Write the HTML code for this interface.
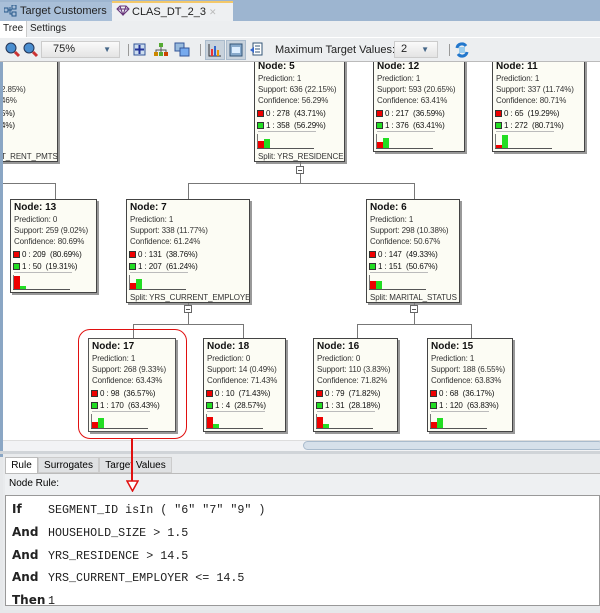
<!DOCTYPE html>
<html><head><meta charset="utf-8"><style>
*{margin:0;padding:0;box-sizing:border-box}
body{width:600px;height:610px;overflow:hidden;background:#e6e8ea;font-family:"Liberation Sans","DejaVu Sans",sans-serif;position:relative}
.a{position:absolute}
.tabbar{left:0;top:0;width:600px;height:21px;background:#9db5d0}
.tab{top:2px;height:19px;font-size:11px;line-height:19px;color:#222;padding-left:20px;white-space:nowrap;overflow:hidden}
.canvas{left:3px;top:62px;width:597px;height:378px;background:#fff;overflow:hidden}
.inner{left:-3px;top:-62px;width:600px;height:500px}
.node{position:absolute;background:#fcfcf4;border:1px solid #444;box-shadow:2px 2px 0 #999;font-size:8px;color:#333;overflow:hidden;white-space:nowrap;letter-spacing:-0.1px}
.node .t{position:absolute;left:3px;top:1px;font-size:10px;font-weight:bold;color:#111;line-height:13px;letter-spacing:0}
.node .l{position:absolute;left:3px;line-height:11px}
.node .g{position:absolute;left:2px;line-height:12px;color:#111}
.sq{display:inline-block;width:7px;height:7px;border:1px solid #333;vertical-align:-1px;margin-right:2px}
.r{background:#e00}.gr{background:#2d2}
.sep{position:absolute;left:3px;top:72px;height:1px;background:#bbb}
.base{position:absolute;left:2px;top:89px;height:1px;background:#555}
.vax{position:absolute;left:2px;top:75px;width:1px;height:15px;background:#777}
.bar{position:absolute;width:6px}
.ln{position:absolute;background:#777}
.cb{position:absolute;width:8px;height:8px;border:1px solid #666;background:#fff}
.cb:after{content:"";position:absolute;left:1px;top:3px;width:4px;height:1px;background:#555}
.rule{font-family:"Liberation Mono","DejaVu Sans Mono",monospace;font-size:11.7px;color:#222}
.rule b{font-family:"DejaVu Sans","Liberation Sans",sans-serif;font-size:12px;display:inline-block;width:36px}
</style></head><body>
<div class="a tabbar"></div>
<div class="a tab" style="left:0;width:112px;background:#a9bfd8">Target Customers <span style="color:#bcd;font-size:9px">✕</span></div>
<svg class="a" style="left:4px;top:5px" width="14" height="12"><rect x="0" y="3" width="4" height="4" fill="none" stroke="#258" /><rect x="8" y="0" width="4" height="4" fill="none" stroke="#258"/><rect x="8" y="7" width="4" height="4" fill="none" stroke="#258"/><path d="M4 5H8M6 2V9H8" stroke="#258" fill="none"/></svg>
<div class="a tab" style="left:112px;width:121px;background:#eef0f2;border-top:2px solid #f3c86a;top:1px;height:20px">CLAS_DT_2_3 <span style="color:#bbb;font-size:9px">✕</span></div>
<svg class="a" style="left:116px;top:5px" width="14" height="11"><path d="M1 4L4 1H10L13 4L7 10Z M1 4H13 M4 1L7 10L10 1" stroke="#637" fill="#dde" stroke-width="1"/></svg>
<div class="a" style="left:0;top:21px;width:600px;height:16px;background:#eceef0;font-size:10px;line-height:16px;color:#222;white-space:nowrap"><span style="background:#fff;padding:0 3px;display:inline-block;border-right:1px solid #ccc">Tree</span> Settings</div>
<div class="a" style="left:0;top:37px;width:600px;height:25px;background:#eceef0;border-top:1px solid #fff;border-bottom:1px solid #bbb;font-size:11px;color:#222;white-space:nowrap">
<svg class="a" style="left:5px;top:4px" width="40" height="16"><circle cx="6" cy="6" r="5" fill="#4a8ed0" stroke="#235"/><path d="M10 10L14 14" stroke="#c33" stroke-width="3"/><circle cx="24" cy="6" r="5" fill="#4a8ed0" stroke="#235"/><path d="M28 10L32 14" stroke="#c33" stroke-width="3"/></svg>
<div class="a" style="left:41px;top:3px;width:79px;height:17px;border:1px solid #ccc;background:linear-gradient(#fafafa,#e4e4e4);padding-left:11px;line-height:15px">75%<span style="position:absolute;right:8px;top:0;color:#468;font-size:8px">▼</span></div>
<div class="a" style="left:128px;top:6px;width:1px;height:12px;background:#999"></div>
<svg class="a" style="left:133px;top:4px" width="60" height="16"><rect x="1" y="2" width="11" height="11" fill="#cde" stroke="#359"/><path d="M6.5 3V12M2 7.5H11" stroke="#239" stroke-width="2"/><rect x="26" y="1" width="4" height="4" fill="#5a3"/><rect x="21" y="10" width="4" height="4" fill="#c80"/><rect x="26" y="10" width="4" height="4" fill="#5a3"/><rect x="31" y="10" width="4" height="4" fill="#c40"/><path d="M28 5V10M23 10V8H33V10" stroke="#555" fill="none"/><rect x="42" y="1" width="9" height="8" fill="#9bd" stroke="#359"/><rect x="47" y="6" width="9" height="8" fill="#7ae" stroke="#359"/></svg>
<div class="a" style="left:200px;top:6px;width:1px;height:12px;background:#999"></div>
<div class="a" style="left:205px;top:2px;width:20px;height:20px;background:#c8d2dc;border:1px solid #abc"></div>
<svg class="a" style="left:208px;top:5px" width="14" height="14"><path d="M1 1V13H13" stroke="#333" fill="none"/><rect x="3" y="6" width="2" height="7" fill="#e33"/><rect x="6" y="3" width="2" height="10" fill="#36c"/><rect x="9" y="7" width="2" height="6" fill="#e90"/></svg>
<div class="a" style="left:226px;top:2px;width:20px;height:20px;background:#c8d2dc;border:1px solid #abc"></div>
<svg class="a" style="left:229px;top:5px" width="14" height="14"><rect x="1" y="1" width="12" height="12" fill="#8ac" stroke="#357"/><rect x="3" y="4" width="8" height="6" fill="#def"/></svg>
<svg class="a" style="left:249px;top:4px" width="14" height="16"><rect x="4" y="1" width="9" height="12" fill="#fff" stroke="#357"/><path d="M6 4H11M6 7H11M6 10H11" stroke="#357"/><path d="M1 8L5 5V11Z" fill="#36c"/></svg>
<div class="a" style="left:275px;top:0;line-height:24px;font-size:11px">Maximum Target Values:</div>
<div class="a" style="left:394px;top:3px;width:44px;height:17px;border:1px solid #ccc;background:linear-gradient(#fafafa,#e4e4e4);padding-left:6px;line-height:15px">2<span style="position:absolute;right:8px;top:0;color:#468;font-size:8px">▼</span></div>
<div class="a" style="left:449px;top:6px;width:1px;height:12px;background:#999"></div>
<svg class="a" style="left:454px;top:4px" width="16" height="16"><path d="M3 6A5 5 0 0 1 12 4M13 10A5 5 0 0 1 4 12" stroke="#27c" stroke-width="3" fill="none"/><rect x="5" y="5" width="6" height="6" fill="#9ce"/></svg>
</div>
<div class="a" style="left:0;top:62px;width:3px;height:395px;background:#8aa6c4"></div>

<div class="a canvas"><div class="a inner">
<div class="node" style="left:-50px;top:58px;width:108px;height:104px">
<div class="l" style="top:25px;left:50px">2.85%)</div><div class="l" style="top:36px;left:50px">46%</div>
<div class="g" style="top:49px;left:50px">5%)</div><div class="g" style="top:61px;left:50px">4%)</div>
<div class="l" style="top:92px;left:50px">T_RENT_PMTS</div></div>

<div class="node" style="left:254px;top:58px;width:91px;height:104px"><div class="t">Node: 5</div><div class="l" style="top:14px">Prediction: 1</div><div class="l" style="top:25px">Support: 636 (22.15%)</div><div class="l" style="top:36px">Confidence: 56.29%</div><div class="g" style="top:49px"><span class="sq r"></span>0 : 278 &nbsp;(43.71%)</div><div class="g" style="top:61px"><span class="sq gr"></span>1 : 358 &nbsp;(56.29%)</div><div class="sep" style="width:58px"></div><div class="vax"></div><div class="bar r" style="left:3px;top:82px;height:7px"></div><div class="bar gr" style="left:9px;top:80px;height:9px"></div><div class="base" style="width:57px"></div><div class="l" style="top:92px">Split: YRS_RESIDENCE</div></div>
<div class="node" style="left:373px;top:58px;width:92px;height:94px"><div class="t">Node: 12</div><div class="l" style="top:14px">Prediction: 1</div><div class="l" style="top:25px">Support: 593 (20.65%)</div><div class="l" style="top:36px">Confidence: 63.41%</div><div class="g" style="top:49px"><span class="sq r"></span>0 : 217 &nbsp;(36.59%)</div><div class="g" style="top:61px"><span class="sq gr"></span>1 : 376 &nbsp;(63.41%)</div><div class="sep" style="width:58px"></div><div class="vax"></div><div class="bar r" style="left:3px;top:83px;height:6px"></div><div class="bar gr" style="left:9px;top:79px;height:10px"></div><div class="base" style="width:57px"></div></div>
<div class="node" style="left:492px;top:58px;width:93px;height:94px"><div class="t">Node: 11</div><div class="l" style="top:14px">Prediction: 1</div><div class="l" style="top:25px">Support: 337 (11.74%)</div><div class="l" style="top:36px">Confidence: 80.71%</div><div class="g" style="top:49px"><span class="sq r"></span>0 : 65 &nbsp;(19.29%)</div><div class="g" style="top:61px"><span class="sq gr"></span>1 : 272 &nbsp;(80.71%)</div><div class="sep" style="width:58px"></div><div class="vax"></div><div class="bar r" style="left:3px;top:86px;height:3px"></div><div class="bar gr" style="left:9px;top:76px;height:13px"></div><div class="base" style="width:57px"></div></div>

<div class="ln" style="left:300px;top:162px;width:1px;height:21px"></div>
<div class="cb" style="left:296px;top:166px"></div>
<div class="ln" style="left:188px;top:183px;width:227px;height:1px"></div>
<div class="ln" style="left:188px;top:183px;width:1px;height:16px"></div>
<div class="ln" style="left:414px;top:183px;width:1px;height:16px"></div>
<div class="ln" style="left:0;top:183px;width:56px;height:1px"></div>
<div class="ln" style="left:55px;top:183px;width:1px;height:16px"></div>

<div class="node" style="left:10px;top:199px;width:87px;height:94px"><div class="t">Node: 13</div><div class="l" style="top:14px">Prediction: 0</div><div class="l" style="top:25px">Support: 259 (9.02%)</div><div class="l" style="top:36px">Confidence: 80.69%</div><div class="g" style="top:49px"><span class="sq r"></span>0 : 209 &nbsp;(80.69%)</div><div class="g" style="top:61px"><span class="sq gr"></span>1 : 50 &nbsp;(19.31%)</div><div class="sep" style="width:58px"></div><div class="vax"></div><div class="bar r" style="left:3px;top:76px;height:13px"></div><div class="bar gr" style="left:9px;top:86px;height:3px"></div><div class="base" style="width:57px"></div></div>
<div class="node" style="left:126px;top:199px;width:124px;height:104px"><div class="t">Node: 7</div><div class="l" style="top:14px">Prediction: 1</div><div class="l" style="top:25px">Support: 338 (11.77%)</div><div class="l" style="top:36px">Confidence: 61.24%</div><div class="g" style="top:49px"><span class="sq r"></span>0 : 131 &nbsp;(38.76%)</div><div class="g" style="top:61px"><span class="sq gr"></span>1 : 207 &nbsp;(61.24%)</div><div class="sep" style="width:58px"></div><div class="vax"></div><div class="bar r" style="left:3px;top:83px;height:6px"></div><div class="bar gr" style="left:9px;top:79px;height:10px"></div><div class="base" style="width:57px"></div><div class="l" style="top:92px">Split: YRS_CURRENT_EMPLOYER</div></div>
<div class="node" style="left:366px;top:199px;width:94px;height:104px"><div class="t">Node: 6</div><div class="l" style="top:14px">Prediction: 1</div><div class="l" style="top:25px">Support: 298 (10.38%)</div><div class="l" style="top:36px">Confidence: 50.67%</div><div class="g" style="top:49px"><span class="sq r"></span>0 : 147 &nbsp;(49.33%)</div><div class="g" style="top:61px"><span class="sq gr"></span>1 : 151 &nbsp;(50.67%)</div><div class="sep" style="width:58px"></div><div class="vax"></div><div class="bar r" style="left:3px;top:81px;height:8px"></div><div class="bar gr" style="left:9px;top:81px;height:8px"></div><div class="base" style="width:57px"></div><div class="l" style="top:92px">Split: MARITAL_STATUS</div></div>

<div class="ln" style="left:188px;top:303px;width:1px;height:21px"></div>
<div class="cb" style="left:184px;top:305px"></div>
<div class="ln" style="left:133px;top:324px;width:111px;height:1px"></div>
<div class="ln" style="left:133px;top:324px;width:1px;height:14px"></div>
<div class="ln" style="left:243px;top:324px;width:1px;height:14px"></div>
<div class="ln" style="left:414px;top:303px;width:1px;height:21px"></div>
<div class="cb" style="left:410px;top:305px"></div>
<div class="ln" style="left:357px;top:324px;width:115px;height:1px"></div>
<div class="ln" style="left:357px;top:324px;width:1px;height:14px"></div>
<div class="ln" style="left:471px;top:324px;width:1px;height:14px"></div>

<div class="node" style="left:88px;top:338px;width:88px;height:94px;border-color:#555"><div class="t">Node: 17</div><div class="l" style="top:14px">Prediction: 1</div><div class="l" style="top:25px">Support: 268 (9.33%)</div><div class="l" style="top:36px">Confidence: 63.43%</div><div class="g" style="top:49px"><span class="sq r"></span>0 : 98 &nbsp;(36.57%)</div><div class="g" style="top:61px"><span class="sq gr"></span>1 : 170 &nbsp;(63.43%)</div><div class="sep" style="width:58px"></div><div class="vax"></div><div class="bar r" style="left:3px;top:83px;height:6px"></div><div class="bar gr" style="left:9px;top:79px;height:10px"></div><div class="base" style="width:57px"></div></div>
<div class="node" style="left:203px;top:338px;width:83px;height:94px"><div class="t">Node: 18</div><div class="l" style="top:14px">Prediction: 0</div><div class="l" style="top:25px">Support: 14 (0.49%)</div><div class="l" style="top:36px">Confidence: 71.43%</div><div class="g" style="top:49px"><span class="sq r"></span>0 : 10 &nbsp;(71.43%)</div><div class="g" style="top:61px"><span class="sq gr"></span>1 : 4 &nbsp;(28.57%)</div><div class="sep" style="width:58px"></div><div class="vax"></div><div class="bar r" style="left:3px;top:78px;height:11px"></div><div class="bar gr" style="left:9px;top:85px;height:4px"></div><div class="base" style="width:57px"></div></div>
<div class="node" style="left:313px;top:338px;width:85px;height:94px"><div class="t">Node: 16</div><div class="l" style="top:14px">Prediction: 0</div><div class="l" style="top:25px">Support: 110 (3.83%)</div><div class="l" style="top:36px">Confidence: 71.82%</div><div class="g" style="top:49px"><span class="sq r"></span>0 : 79 &nbsp;(71.82%)</div><div class="g" style="top:61px"><span class="sq gr"></span>1 : 31 &nbsp;(28.18%)</div><div class="sep" style="width:58px"></div><div class="vax"></div><div class="bar r" style="left:3px;top:78px;height:11px"></div><div class="bar gr" style="left:9px;top:85px;height:4px"></div><div class="base" style="width:57px"></div></div>
<div class="node" style="left:427px;top:338px;width:86px;height:94px"><div class="t">Node: 15</div><div class="l" style="top:14px">Prediction: 1</div><div class="l" style="top:25px">Support: 188 (6.55%)</div><div class="l" style="top:36px">Confidence: 63.83%</div><div class="g" style="top:49px"><span class="sq r"></span>0 : 68 &nbsp;(36.17%)</div><div class="g" style="top:61px"><span class="sq gr"></span>1 : 120 &nbsp;(63.83%)</div><div class="sep" style="width:58px"></div><div class="vax"></div><div class="bar r" style="left:3px;top:83px;height:6px"></div><div class="bar gr" style="left:9px;top:79px;height:10px"></div><div class="base" style="width:57px"></div></div>

<div class="a" style="left:78px;top:329px;width:109px;height:110px;border:1.5px solid #e01010;border-radius:12px"></div>
</div></div>

<div class="a" style="left:3px;top:440px;width:597px;height:11px;background:#f2f3f5;border-top:1px solid #ddd"></div>
<div class="a" style="left:303px;top:441px;width:300px;height:9px;background:#d6e0ea;border:1px solid #a9bbcd;border-radius:5px"></div>
<div class="a" style="left:0;top:451px;width:600px;height:3px;background:#d0d4d8"></div>

<div class="a" style="left:3px;top:454px;width:597px;height:156px;background:#e9ebed"></div>
<div class="a" style="left:5px;top:457px;width:33px;height:17px;background:#fff;border:1px solid #bbb;border-bottom:none;font-size:10px;line-height:16px;text-align:center">Rule</div>
<div class="a" style="left:38px;top:457px;width:61px;height:16px;background:#dfe1e3;border:1px solid #ccc;font-size:10px;line-height:15px;text-align:center">Surrogates</div>
<div class="a" style="left:99px;top:457px;width:73px;height:16px;background:#dfe1e3;border:1px solid #ccc;font-size:10px;line-height:15px;text-align:center">Target Values</div>
<div class="a" style="left:5px;top:473px;width:595px;height:22px;background:#eef0f2;border-top:1px solid #bbb;font-size:10px;line-height:20px;padding-left:4px">Node Rule:</div>
<div class="a rule" style="left:5px;top:495px;width:595px;height:111px;background:#fff;border:1px solid #999;padding:3px 0 0 6px;line-height:21.8px;white-space:nowrap">
<div><b>If</b>SEGMENT_ID isIn ( "6" "7" "9" )</div>
<div><b>And</b>HOUSEHOLD_SIZE &gt; 1.5</div>
<div><b>And</b>YRS_RESIDENCE &gt; 14.5</div>
<div><b>And</b>YRS_CURRENT_EMPLOYER &lt;= 14.5</div>
<div><b>Then</b>1</div>
</div>

<div class="a" style="left:131px;top:438px;width:2px;height:44px;background:#e01010"></div>
<svg class="a" style="left:126px;top:480px" width="13" height="12"><path d="M1 1H12L6.5 11Z" fill="#fff" stroke="#e01010" stroke-width="1.5"/></svg>
</body></html>
